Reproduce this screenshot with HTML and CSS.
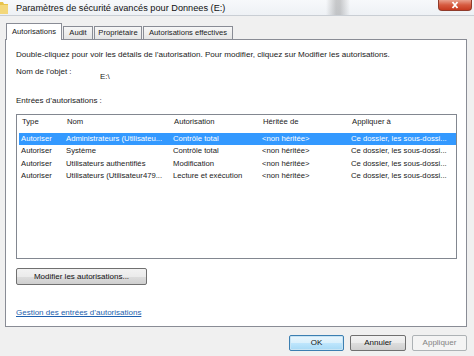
FILE: index.html
```html
<!DOCTYPE html>
<html lang="fr">
<head>
<meta charset="utf-8">
<title>Paramètres de sécurité avancés</title>
<link rel="stylesheet" href="styles.css">
</head>
<body>
<div class="window">
  <div class="titlebar">
    <svg class="folder" width="8" height="15" viewBox="0 0 8 15">
      <path d="M0 2 H3 L4 4 H8 V14 H0 Z" fill="#e8c34a"/>
      <path d="M0 5 H8 V14 H0 Z" fill="#f3d77a"/>
    </svg>
    <span class="title">Paramètres de sécurité avancés pour Donnees (E:)</span>
    <span class="close">
      <svg width="10" height="8" viewBox="0 0 10 8"><path d="M2.5 1 L7.5 7 M7.5 1 L2.5 7" stroke="#fff" stroke-width="1.8"/></svg>
    </span>
  </div>

  <div class="tabs">
    <div class="tab active">Autorisations</div>
    <div class="tab t-audit">Audit</div>
    <div class="tab t-owner">Propriétaire</div>
    <div class="tab t-eff">Autorisations effectives</div>
  </div>

  <div class="panel">
    <p class="intro">Double-cliquez pour voir les détails de l’autorisation. Pour modifier, cliquez sur Modifier les autorisations.</p>
    <div class="objrow">
      <span class="lbl">Nom de l’objet :</span>
      <span class="val">E:\</span>
    </div>
    <div class="entries">Entrées d’autorisations :</div>
    <div class="list">
      <div class="row head">
        <span>Type</span><span>Nom</span><span>Autorisation</span><span>Héritée de</span><span>Appliquer à</span>
      </div>
      <div class="row sel">
        <span>Autoriser</span><span>Administrateurs (Utilisateu...</span><span>Contrôle total</span><span>&lt;non héritée&gt;</span><span>Ce dossier, les sous-dossi...</span>
      </div>
      <div class="row">
        <span>Autoriser</span><span>Système</span><span>Contrôle total</span><span>&lt;non héritée&gt;</span><span>Ce dossier, les sous-dossi...</span>
      </div>
      <div class="row">
        <span>Autoriser</span><span>Utilisateurs authentifiés</span><span>Modification</span><span>&lt;non héritée&gt;</span><span>Ce dossier, les sous-dossi...</span>
      </div>
      <div class="row">
        <span>Autoriser</span><span>Utilisateurs (Utilisateur479...</span><span>Lecture et exécution</span><span>&lt;non héritée&gt;</span><span>Ce dossier, les sous-dossi...</span>
      </div>
    </div>
    <div class="btn modify">Modifier les autorisations...</div>
    <a class="link" href="#">Gestion des entrées d’autorisations</a>
  </div>

  <div class="footer">
    <div class="btn ok">OK</div>
    <div class="btn cancel">Annuler</div>
    <div class="btn apply disabled">Appliquer</div>
  </div>
</div>
</body>
</html>
```

FILE: styles.css
```css
* { box-sizing: border-box; }
html, body { margin: 0; padding: 0; }
body {
  background: #f0f0f0;
  font-family: "Liberation Sans", Arial, sans-serif;
  font-size: 8px;
  color: #1a1a1a;
}
.window {
  width: 474px;
  height: 356px;
  overflow: hidden;
  background: #f0f0f0;
}

/* title bar */
.titlebar {
  height: 16px;
  display: flex;
  align-items: flex-start;
  border-bottom: 1px solid #c9ced4;
  background:
    linear-gradient(90deg, rgba(0,0,0,0) 326px, rgba(90,90,90,0.3) 336px, rgba(90,90,90,0.3) 340px, rgba(0,0,0,0) 350px),
    linear-gradient(180deg, #f7f9fb, #eef1f5);
}
.folder { flex: none; }
.title {
  margin-left: 8px;
  font-size: 9.2px;
  line-height: 16px;
  color: #111;
  flex: 1;
}
.close {
  flex: none;
  width: 34px;
  height: 11px;
  margin-right: 2px;
  border-radius: 0 0 4px 4px;
  background: linear-gradient(180deg, #e9a08d 0%, #d65a40 50%, #c63a20 100%);
  border: 1px solid #8f3b2b;
  border-top: none;
  display: flex;
  align-items: center;
  justify-content: center;
}

/* tabs */
.tabs {
  height: 23px;
  display: flex;
  align-items: flex-end;
  padding-left: 6px;
  gap: 1px;
  position: relative;
  z-index: 1;
  font-size: 7.6px;
}
.tab {
  height: 13px;
  border: 1px solid #898c95;
  border-bottom: none;
  background: linear-gradient(180deg, #f7f7f7, #e5e5e5);
  text-align: center;
  line-height: 12px;
  white-space: nowrap;
}
.tab.active {
  width: 56px;
  height: 17px;
  margin-bottom: -1px;
  background: #fff;
  line-height: 15px;
}
.t-audit { width: 30px; }
.t-owner { width: 48px; }
.t-eff { width: 90px; }

/* panel */
.panel {
  margin-left: 5px;
  width: 462px;
  height: 288px;
  border: 1px solid #898c95;
  background: #fff;
  padding-left: 10px;
}
.intro {
  margin: 10px 0 0 0;
  line-height: 10px;
  white-space: nowrap;
  font-size: 8.1px;
}
.objrow {
  margin-top: 7px;
  height: 15px;
  display: flex;
}
.lbl { width: 84px; line-height: 10px; }
.val { padding-top: 5px; line-height: 10px; }
.entries {
  margin-top: 14px;
  line-height: 10px;
}
.list {
  margin-top: 8px;
  width: 441px;
  height: 145px;
  border: 1px solid #828790;
  padding: 0 0 0 2px;
  font-size: 7.7px;
}
.row {
  display: grid;
  grid-template-columns: 45px 107px 89px 89px 106px;
  height: 12.5px;
  line-height: 12.5px;
  white-space: nowrap;
}
.row span {
  padding-left: 2px;
  overflow: hidden;
}
.row.head {
  height: 17.5px;
  line-height: 14px;
  color: #222;
}
.row.head span { padding-left: 3px; }
.row.sel {
  background: #3399ff;
  color: #fff;
}

/* buttons */
.btn {
  height: 16px;
  border: 1px solid #707070;
  border-radius: 2px;
  background: linear-gradient(180deg, #f2f2f2 0%, #ebebeb 50%, #dddddd 51%, #cfcfcf 100%);
  text-align: center;
  line-height: 14px;
  color: #111;
  white-space: nowrap;
}
.modify {
  margin-top: 9px;
  width: 131px;
  height: 17px;
  line-height: 15px;
}
.link {
  display: block;
  margin-top: 23px;
  line-height: 10px;
  color: #1d5fae;
  text-decoration: underline;
  width: max-content;
}

.footer {
  display: flex;
  justify-content: flex-end;
  gap: 6px;
  padding-right: 7px;
  margin-top: 8px;
}
.ok {
  width: 55px;
  border-color: #3c7fb1;
  background: linear-gradient(180deg, #eaf6fd 0%, #d9f0fc 50%, #bee6fd 51%, #a7d9f5 100%);
  box-shadow: inset 0 0 0 1px #c8e4f4;
}
.cancel { width: 56px; }
.apply { width: 55px; }
.disabled {
  border-color: #adb2b5;
  background: #f4f4f4;
  color: #838383;
}
```
